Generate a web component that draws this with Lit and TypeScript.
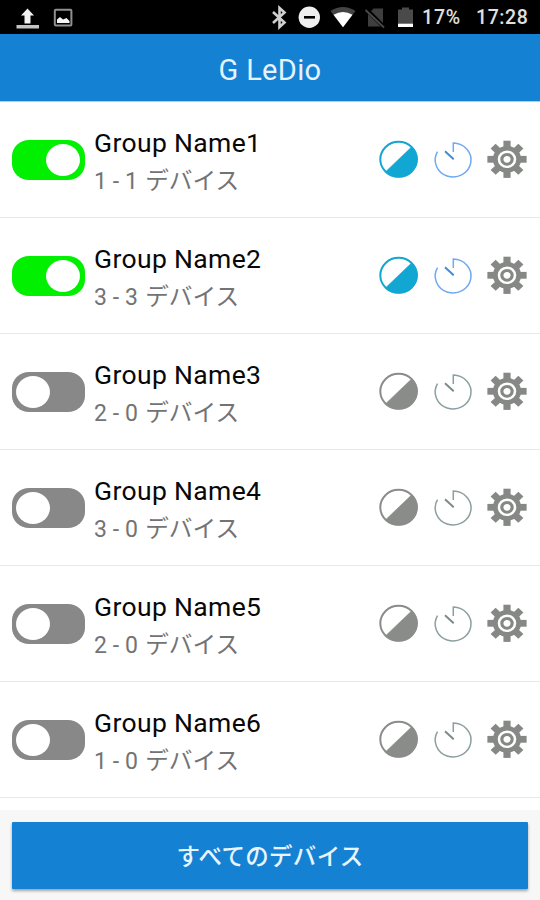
import { LitElement, html, svg, css } from "lit";
import { customElement, property } from "lit/decorators.js";
import { classMap } from "lit/directives/class-map.js";

interface Group {
  name: string;
  count: string;
  on: boolean;
}

const groups: Group[] = [
  { name: "Group Name1", count: "1 - 1", on: true },
  { name: "Group Name2", count: "3 - 3", on: true },
  { name: "Group Name3", count: "2 - 0", on: false },
  { name: "Group Name4", count: "3 - 0", on: false },
  { name: "Group Name5", count: "2 - 0", on: false },
  { name: "Group Name6", count: "1 - 0", on: false },
];

@customElement("status-bar")
export class StatusBar extends LitElement {
  static styles = css`
    :host {
      display: flex;
      align-items: center;
      height: 34px;
      background: #000;
      color: #e0e0e0;
      font: 500 19.5px/34px Roboto, sans-serif;
    }
    svg {
      display: block;
      flex: none;
    }
    .left {
      width: 100px;
    }
    .gap {
      flex: 1;
    }
    .battery {
      width: 46px;
      padding-top: 2px;
      letter-spacing: 0.8px;
    }
    .clock {
      width: 64px;
      margin-left: 8px;
      padding-top: 2px;
      letter-spacing: 0.6px;
    }
  `;

  render() {
    return html`
      <svg class="left" width="100" height="34" viewBox="0 0 100 34">
        <path d="M27.500 8.500 34 15.500H30.500V23.500H24.500V15.500H21Z" fill="#f2f2f2" />
        <path d="M16.500 25H39V28.500H16.500Z" fill="#c4c4c4" />
        <rect x="54.800" y="9.800" width="16.600" height="15.600" rx="1" fill="none" stroke="#909090" stroke-width="2" />
        <path d="M57 23V19.500L60 17 63 19.500 66.500 18 69.500 21V23Z" fill="#f4f4f4" />
      </svg>
      <div class="gap"></div>
      <svg width="162" height="34" viewBox="260 0 162 34">
        <path d="M273 12 284.500 22.500 279.500 27V8L284.500 12.500 273 23" fill="none" stroke="#d0d0d0" stroke-width="2.600" />
        <circle cx="309.300" cy="17.300" r="10.700" fill="#efefef" />
        <path d="M304 17.300H315" stroke="#000" stroke-width="2.600" />
        <path d="M330.500 11Q343 3 355.500 11L343 27.300Z" fill="#444" />
        <path d="M333.500 14.800Q343 9 352.500 14.800L343 27.300Z" fill="#fff" />
        <path d="M368 14.500 373.500 8.500H383V26.500H368Z" fill="#3e3e3e" />
        <path d="M366 9 384.500 27.500" stroke="#000" stroke-width="4" />
        <path d="M365.500 10 384 27.500" stroke="#4a4a4a" stroke-width="1.800" />
        <path d="M398 9.500H402V7.500H409V9.500H413V23H398Z" fill="#4a4a4a" />
        <path d="M398 23.500H413V27H398Z" fill="#fff" />
      </svg>
      <div class="battery">17%</div>
      <div class="clock">17:28</div>
    `;
  }
}

@customElement("group-row")
export class GroupRow extends LitElement {
  @property({ attribute: false }) group!: Group;

  static styles = css`
    :host {
      display: flex;
      align-items: center;
      box-sizing: border-box;
      height: 116px;
      padding: 1px 12px 0;
      border-bottom: 1px solid #e8e8e8;
      background: #fff;
    }
    .toggle {
      display: flex;
      align-items: center;
      box-sizing: border-box;
      width: 73px;
      height: 40px;
      margin-bottom: 1px;
      padding: 0 5px 0 4px;
      border-radius: 17px / 16px;
      background: #888;
    }
    .toggle.on {
      justify-content: flex-end;
      background: #00f000;
    }
    .knob {
      width: 34px;
      height: 32px;
      border-radius: 50%;
      background: #fff;
    }
    .label {
      flex: 1;
      margin-left: 9px;
      padding-top: 6px;
      font-family: Roboto, "Noto Sans CJK JP", sans-serif;
      white-space: nowrap;
    }
    .name {
      height: 38px;
      font-size: 26.5px;
      line-height: 38px;
      letter-spacing: 0.35px;
      color: #080808;
    }
    .detail {
      display: flex;
      align-items: baseline;
      height: 40px;
      line-height: 38px;
      color: #737373;
    }
    .count {
      margin-right: 7px;
      font-size: 23px;
      letter-spacing: 0.1px;
    }
    .unit {
      font-size: 23.7px;
    }
    .icons {
      display: block;
      flex: none;
      margin-right: -12px;
    }
  `;

  render() {
    const { name, count, on } = this.group;
    const tone = on ? "#12a6d3" : "#8a8c8a";
    const timer = on ? "#6fa9f0" : "#8c9e9e";
    const hand = on ? "#3c8ad8" : "#7b8888";
    return html`
      <div class=${classMap({ toggle: true, on })}><div class="knob"></div></div>
      <div class="label">
        <div class="name">${name}</div>
        <div class="detail"><span class="count">${count}</span><span class="unit">デバイス</span></div>
      </div>
      <svg class="icons" width="170" height="60" viewBox="370 0 170 60">
        <ellipse cx="398.600" cy="29.300" rx="18.300" ry="17.500" fill="#fff" stroke="${tone}" stroke-width="2" />
        <path d="M411.800 16.700A18.600 17.800 0 0 1 385.400 41.900Z" fill="${tone}" stroke="${tone}" stroke-width="0.600" />
        <path d="M437.500 21.700A17.900 17 0 1 0 453.300 13V22" fill="none" stroke="${timer}" stroke-width="1.500" />
        <path d="M445 21.200 453.700 29.200" stroke="${hand}" stroke-width="1.900" />
        <g transform="translate(507 29.300) scale(1.055 1)" stroke="#868886" fill="none">
          ${[0, 45, 90, 135, 180, 225, 270, 315].map(
            (a) => svg`<path d="M-3.400 -12V-18.600H3.400V-12Z" fill="#868886" stroke="none" transform="rotate(${a})" />`
          )}
          <circle r="11.100" stroke-width="4.600" />
          <circle r="4.900" stroke-width="3" />
        </g>
      </svg>
    `;
  }
}

@customElement("app-root")
export class AppRoot extends LitElement {
  static styles = css`
    :host {
      display: flex;
      flex-direction: column;
      height: 900px;
      overflow: hidden;
      background: #f7f7f7;
    }
    .title {
      box-sizing: border-box;
      height: 68px;
      padding-top: 3px;
      border-bottom: 1px solid #a9cff0;
      background: #1581d3;
      color: #e6f3fd;
      font: 29px/67px Roboto, sans-serif;
      letter-spacing: 0.35px;
      text-align: center;
    }
    .list {
      height: 708px;
      background: #fff;
    }
    .footer {
      flex: 1;
      padding: 12px 12px 0;
    }
    .all {
      display: block;
      width: 100%;
      height: 67px;
      padding: 0;
      border: 0;
      border-radius: 1px;
      background: #1581d3;
      box-shadow: 0 2px 3px rgba(0, 0, 0, 0.35);
      color: #e8f5ff;
      font: 500 23.5px/67px "Noto Sans CJK JP", sans-serif;
      letter-spacing: 0.3px;
    }
  `;

  render() {
    return html`
      <status-bar></status-bar>
      <div class="title">G LeDio</div>
      <div class="list">
        ${groups.map((g) => html`<group-row .group=${g}></group-row>`)}
      </div>
      <div class="footer"><button class="all">すべてのデバイス</button></div>
    `;
  }
}
